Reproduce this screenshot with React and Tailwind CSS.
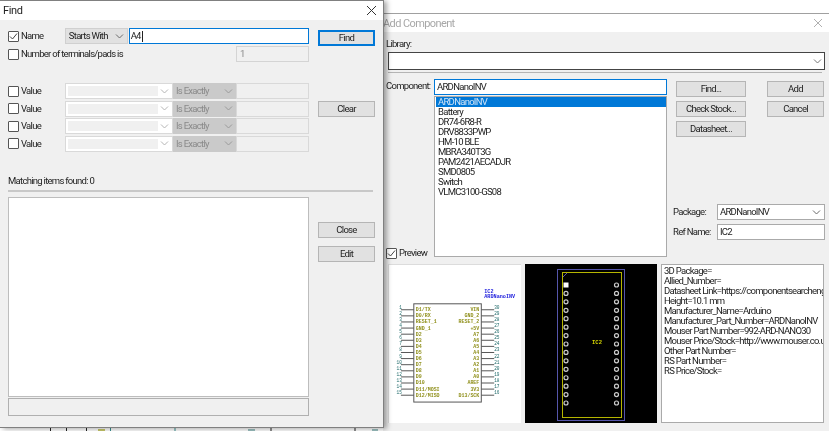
const font = { fontFamily: 'Roboto, "Liberation Sans", Arial, sans-serif' };

const components = [
  "ARDNanoINV",
  "Battery",
  "DR74-6R8-R",
  "DRV8833PWP",
  "HM-10 BLE",
  "MBRA340T3G",
  "PAM2421AECADJR",
  "SMD0805",
  "Switch",
  "VLMC3100-GS08",
];

const attributes = [
  "3D Package=",
  "Allied_Number=",
  "Datasheet Link=https://componentsearchengine.com",
  "Height=10.1 mm",
  "Manufacturer_Name=Arduino",
  "Manufacturer_Part_Number=ARDNanoINV",
  "Mouser Part Number=992-ARD-NANO30",
  "Mouser Price/Stock=http://www.mouser.co.uk/Search",
  "Other Part Number=",
  "RS Part Number=",
  "RS Price/Stock=",
];

const leftPins = ["D1/TX", "D0/RX", "RESET_1", "GND_1", "D2", "D3", "D4", "D5", "D6", "D7", "D8", "D9", "D10", "D11/MOSI", "D12/MISO"];
const rightPins = ["VIN", "GND_2", "RESET_2", "+5V", "A7", "A6", "A5", "A4", "A3", "A2", "A1", "A0", "AREF", "3V3", "D13/SCK"];

function Chevron({ color = "#6b6b6b" }) {
  return (
    <svg width="9" height="5" viewBox="0 0 9 5" className="shrink-0">
      <path d="M1 0.5 L4.5 4 L8 0.5" fill="none" stroke={color} strokeWidth="1" />
    </svg>
  );
}

function Checkbox({ checked }) {
  return (
    <span className="flex h-[11px] w-[11px] shrink-0 items-center justify-center self-center rounded-[1px] border border-[#555] bg-white">
      {checked && (
        <svg width="9" height="9" viewBox="0 0 9 9">
          <path d="M1 4.5 L3.5 7 L8 1.5" fill="none" stroke="#444" strokeWidth="1" />
        </svg>
      )}
    </span>
  );
}

function Button({ children, className = "" }) {
  return (
    <div className={`flex h-[16px] items-center justify-center border border-[#b5b5b5] bg-[#e1e1e1] text-[#222] ${className}`}>
      {children}
    </div>
  );
}

function ValueRow() {
  return (
    <div className="flex h-[16px] items-stretch">
      <Checkbox />
      <span className="ml-[2px] w-[44px] self-center text-[#222]">Value</span>
      <div className="flex w-[108px] items-center justify-between border border-[#d9d9d9] bg-white pl-[2px] pr-[3px]">
        <span className="h-[10px] w-[90px] bg-[#f0f0f0]" />
        <Chevron color="#b5b5b5" />
      </div>
      <div className="flex w-[63px] items-center justify-between bg-[#cacaca] pl-[3px] pr-[3px] text-[#8a8a8a]">
        Is Exactly
        <Chevron color="#9a9a9a" />
      </div>
      <div className="w-[73px] border border-[#d9d9d9] bg-[#f0f0f0]" />
    </div>
  );
}

function FindDialog() {
  return (
    <div className="absolute left-0 top-0 z-10 flex h-[428px] w-[384px] flex-col border-b border-r border-t border-[#808080] bg-[#f0f0f0] shadow-[3px_1px_5px_rgba(0,0,0,0.35)]">
      <div className="flex h-[19px] items-center justify-between bg-white pl-[3px] pr-[4px] text-[11px] tracking-[-0.4px] text-[#222]">
        Find
        <svg width="11" height="11" viewBox="0 0 11 11" className="mr-[2px]">
          <path d="M1 1 L10 10 M10 1 L1 10" stroke="#333" strokeWidth="1" />
        </svg>
      </div>

      <div className="flex h-[170px] px-[8px]">
        <div className="flex w-[301px] flex-col">
          <div className="mt-[8px] flex h-[16px] items-center">
            <Checkbox checked />
            <span className="ml-[2px] w-[44px] text-[#222]">Name</span>
            <div className="flex h-full w-[63px] items-center justify-between border border-[#d0d0d0] bg-[#e1e1e1] pl-[3px] pr-[3px] text-[#222]">
              Starts With
              <Chevron />
            </div>
            <div className="ml-[1px] flex h-full w-[181px] items-center border border-[#0078d7] bg-white pl-[1px] text-[#222]">
              A4
              <span className="ml-px h-[11px] w-px bg-[#222]" />
            </div>
          </div>
          <div className="mt-[2px] flex h-[16px] items-center">
            <Checkbox />
            <span className="ml-[2px] text-[#222]">Number of terminals/pads is</span>
            <div className="ml-auto flex h-full w-[73px] items-center border border-[#d4d4d4] pl-[3px] text-[#8a8a8a]">1</div>
          </div>
          <div className="mt-[21px] flex flex-col gap-[1.5px]">
            <ValueRow />
            <ValueRow />
            <ValueRow />
            <ValueRow />
          </div>
          <div className="mt-[24px] text-[#222]">Matching items found: 0</div>
        </div>
        <div className="ml-[9px] flex w-[57px] flex-col">
          <Button className="mt-[10px] !border-2 !border-[#0078d7]">Find</Button>
          <Button className="mt-[55px]">Clear</Button>
        </div>
      </div>

      <div className="mx-[8px] h-[2px] w-[365px] bg-[#c8c8c8]" />

      <div className="mt-[5px] flex px-[8px]">
        <div className="flex w-[301px] flex-col gap-[1px]">
          <div className="h-[200px] border border-[#bdbdbd] bg-white" />
          <div className="h-[18px] border border-[#b0b0b0] bg-[#f0f0f0]" />
        </div>
        <div className="ml-[9px] flex w-[57px] flex-col gap-[8px] pt-[25px]">
          <Button>Close</Button>
          <Button>Edit</Button>
        </div>
      </div>
    </div>
  );
}

function SchematicPreview() {
  return (
    <svg viewBox="0 0 133 159" className="h-[159px] w-[133px] border-l border-t border-[#dcdcdc] bg-white tracking-normal" fontFamily="Liberation Mono">
      <text x="96" y="28" fontSize="5.2" fontWeight="bold" fill="#2222dd">IC2</text>
      <text x="96" y="33" fontSize="5.2" fontWeight="bold" fill="#2222dd">ARDNanoINV</text>
      {leftPins.map((name, i) => {
        const y = 45 + i * 6.15;
        return (
          <g key={name}>
            <path d={`M12 ${y} H25`} stroke="#555" strokeWidth="1" />
            <text x="13" y={y - 1} fontSize="4.5" fill="#1f6a6a" textAnchor="end">{i + 1}</text>
            <text x="27" y={y + 1.5} fontSize="5" fill="#8f8f1a" fontWeight="bold">{name}</text>
          </g>
        );
      })}
      {rightPins.map((name, i) => {
        const y = 45 + i * 6.15;
        return (
          <g key={name}>
            <path d={`M93 ${y} H106`} stroke="#555" strokeWidth="1" />
            <text x="106" y={y - 1} fontSize="4.5" fill="#1f6a6a">{30 - i}</text>
            <text x="91" y={y + 1.5} fontSize="5" fill="#8f8f1a" textAnchor="end" fontWeight="bold">{name}</text>
          </g>
        );
      })}
      <rect x="25" y="39" width="68" height="99" fill="none" stroke="#555" strokeWidth="1" />
    </svg>
  );
}

function PcbPreview() {
  const pads = Array.from({ length: 15 }, (_, i) => 21 + i * 8.43);
  return (
    <svg viewBox="0 0 132 159" className="ml-[4px] h-[159px] w-[132px] bg-black tracking-normal">
      <rect x="32.5" y="5.5" width="67" height="151" fill="none" stroke="#5555aa" strokeWidth="1" />
      <rect x="37.5" y="8.5" width="59" height="145" fill="none" stroke="#b5b500" strokeWidth="1" />
      <path d="M38 13 L42 9" stroke="#5555aa" strokeWidth="1" />
      {pads.map((y, i) => (
        <g key={y}>
          {i === 0 ? (
            <rect x="38.5" y={y - 2.5} width="5" height="5" fill="white" />
          ) : (
            <circle cx="41" cy={y} r="2" fill="none" stroke="#ccc" strokeWidth="1.2" />
          )}
          <circle cx="91.5" cy={y} r="2" fill="none" stroke="#ccc" strokeWidth="1.2" />
        </g>
      ))}
      <text x="72" y="80" fontSize="5.5" fontWeight="bold" fill="#d8d800" textAnchor="middle" fontFamily="Liberation Mono">IC2</text>
    </svg>
  );
}

function AddComponentDialog() {
  return (
    <div className="absolute left-[383px] top-[13px] flex h-[418px] w-[446px] flex-col border-t border-[#a0a0a0] bg-[#f0f0f0]">
      <div className="flex h-[18px] items-center justify-between bg-white pr-[6px] text-[11px] tracking-[-0.6px] text-[#a8a8a8]">
        Add Component
        <svg width="10" height="10" viewBox="0 0 10 10">
          <path d="M1 1 L9 9 M9 1 L1 9" stroke="#b0b0b0" strokeWidth="1" />
        </svg>
      </div>

      <div className="mt-[7px] h-[11px] pl-[3px] text-[#222]">Library:</div>
      <div className="ml-[5px] mt-[2px] flex h-[18px] w-[437px] items-center justify-end border border-[#444] bg-white pr-[2px]">
        <Chevron color="#777" />
      </div>
      <div className="ml-[5px] mt-[2px] h-px w-[434px] bg-[#b4b4b4]" />

      <div className="mt-[6px] flex h-[186px] pl-[3px]">
        <div className="flex flex-col">
          <div className="flex">
            <span className="w-[48px] pt-[2px] text-[#222]">Component:</span>
            <div className="flex h-[16px] w-[233px] items-center border border-[#0078d7] bg-white pl-[2px] text-[#222]">ARDNanoINV</div>
          </div>
          <div className="ml-[48px] mt-[1px] h-[161px] w-[233px] border border-[#aaa] bg-white pl-[1px] leading-[9px] text-[#222]">
            {components.map((name, i) => (
              <div key={name} className={`h-[10px] pl-[2px] ${i === 0 ? "bg-[#0078d7] text-[#cfe4f7]" : ""}`}>{name}</div>
            ))}
          </div>
        </div>

        <div className="ml-[6px] flex w-[157px] flex-col">
          <div className="ml-[3px] flex">
            <div className="mt-[2px] flex w-[70px] flex-col gap-[4px]">
              <Button>Find...</Button>
              <Button>Check Stock...</Button>
              <Button>Datasheet...</Button>
            </div>
            <div className="ml-[21px] mt-[2px] flex w-[57px] flex-col gap-[4px]">
              <Button>Add</Button>
              <Button>Cancel</Button>
            </div>
          </div>
          <div className="mt-[67px] flex h-[16px] items-center">
            <span className="w-[44px] shrink-0 text-[#222]">Package:</span>
            <div className="flex h-full w-[108px] shrink-0 items-center justify-between border border-[#aaa] bg-white pl-[2px] pr-[3px] text-[#222]">
              ARDNanoINV
              <Chevron />
            </div>
          </div>
          <div className="mt-[4px] flex h-[16px] items-center">
            <span className="w-[44px] shrink-0 text-[#222]">Ref Name:</span>
            <div className="flex h-full w-[108px] shrink-0 items-center border border-[#aaa] bg-white pl-[2px] text-[#222]">IC2</div>
          </div>
        </div>
      </div>

      <div className="-mt-[19px] flex h-[14px] items-center pl-[3px] text-[#222]">
        <Checkbox checked />
        <span className="ml-[2px]">Preview</span>
      </div>

      <div className="mt-[4px] flex pl-[5px]">
        <SchematicPreview />
        <PcbPreview />
        <div className="ml-[4px] h-[159px] w-[163px] overflow-hidden whitespace-nowrap border border-[#aaa] bg-white pl-[2px] pt-[1px] leading-[10px] text-[#222]">
          {attributes.map((line) => (
            <div key={line}>{line}</div>
          ))}
        </div>
      </div>
    </div>
  );
}

// bits of the schematic sheet that show below the Find window
function BackgroundSheet() {
  return (
    <svg className="absolute left-0 top-[425px] h-[6px] w-[383px]" viewBox="0 0 383 6">
      <path d="M50.5 0 V6 M66.5 0 V6 M86.5 0 V6 M271 0 V6 M355 0 V6" stroke="#222" strokeWidth="1" fill="none" />
      <path d="M110.5 0 V6 M175 0 V6" stroke="#3a8f8f" strokeWidth="1" fill="none" />
      <path d="M98 4 H105 V6 H98 Z" fill="#c8c86a" />
      <path d="M248 4 H255 V6 H248 Z M372 4 H378 V6 H372 Z" fill="#9cc0c0" />
    </svg>
  );
}

export default function App() {
  return (
    <div className="relative h-[431px] w-[829px] overflow-hidden bg-white text-[9.5px] leading-none tracking-[-0.72px] blur-[0.35px]" style={font}>
      <BackgroundSheet />
      <AddComponentDialog />
      <FindDialog />
    </div>
  );
}
